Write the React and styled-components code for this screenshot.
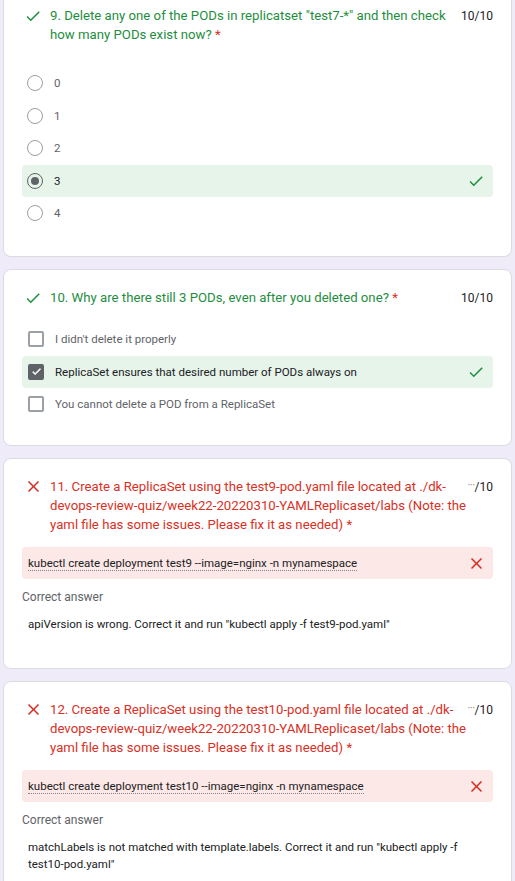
import React from "react";
import styled, { createGlobalStyle } from "styled-components";

const GREEN = "#1e8e3e";
const RED = "#d93025";

const GlobalStyle = createGlobalStyle`
    body {
        margin: 0;
        background: #f0ebf8;
        font-family: Roboto, "Liberation Sans", sans-serif;
    }
`;

const CheckIcon = ({ size = 18, color = GREEN }) => (
    <svg width={size} height={size} viewBox="0 0 24 24" fill={color}>
        <path d="M9 16.17L4.83 12l-1.42 1.41L9 19 21 7l-1.41-1.41z" />
    </svg>
);

const CrossIcon = ({ size = 19, color = RED }) => (
    <svg width={size} height={size} viewBox="0 0 24 24" fill={color}>
        <path d="M19 6.41L17.59 5 12 10.59 6.41 5 5 6.41 10.59 12 5 17.59 6.41 19 12 13.41 17.59 19 19 17.59 13.41 12z" />
    </svg>
);

const questions = [
    {
        id: 9,
        kind: "radio",
        correct: true,
        title: '9. Delete any one of the PODs in replicatset "test7-*" and then check how many PODs exist now?',
        options: ["0", "1", "2", "3", "4"],
        picked: [3],
    },
    {
        id: 10,
        kind: "checkbox",
        correct: true,
        title: "10. Why are there still 3 PODs, even after you deleted one?",
        options: [
            "I didn't delete it properly",
            "ReplicaSet ensures that desired number of PODs always on",
            "You cannot delete a POD from a ReplicaSet",
        ],
        picked: [1],
    },
    {
        id: 11,
        kind: "text",
        correct: false,
        title: "11. Create a ReplicaSet using the test9-pod.yaml file located at ./dk-devops-review-quiz/week22-20220310-YAMLReplicaset/labs (Note: the yaml file has some issues. Please fix it as needed)",
        response: "kubectl create deployment test9 --image=nginx -n mynamespace",
        answer: 'apiVersion is wrong. Correct it and run "kubectl apply -f test9-pod.yaml"',
    },
    {
        id: 12,
        kind: "text",
        correct: false,
        title: "12. Create a ReplicaSet using the test10-pod.yaml file located at ./dk-devops-review-quiz/week22-20220310-YAMLReplicaset/labs (Note: the yaml file has some issues. Please fix it as needed)",
        response: "kubectl create deployment test10 --image=nginx -n mynamespace",
        answer: 'matchLabels is not matched with template.labels. Correct it and run "kubectl apply -f test10-pod.yaml"',
    },
];

const App = () => (
    <>
        <GlobalStyle />
        <Page>
            {questions.map((q, index) => (
                <Card key={q.id} $continued={index === 0} $text={q.kind === "text"}>
                    <Header>
                        <StatusIcon>{q.correct ? <CheckIcon /> : <CrossIcon />}</StatusIcon>
                        <Title $correct={q.correct}>
                            {q.title}&nbsp;<Required>*</Required>
                        </Title>
                        <Score>
                            {q.correct ? "10/10" : <><Dots>···</Dots>/10</>}
                        </Score>
                    </Header>

                    {q.options && (
                        <Options $spaced={q.kind === "radio"}>
                            {q.options.map((opt, i) => {
                                const picked = q.picked.includes(i);
                                return (
                                    <Option key={opt} $picked={picked}>
                                        {q.kind === "radio" ? (
                                            <Radio $picked={picked} />
                                        ) : (
                                            <Box $picked={picked}>
                                                {picked && (
                                                    <svg width="11" height="11" viewBox="0 0 24 24" fill="#fff">
                                                        <path d="M9 16.17L4.83 12l-1.42 1.41L9 19 21 7l-1.41-1.41z" stroke="#fff" strokeWidth="1.5" />
                                                    </svg>
                                                )}
                                            </Box>
                                        )}
                                        <OptionLabel $picked={picked}>{opt}</OptionLabel>
                                        {picked && (
                                            <Mark>
                                                <CheckIcon size={18} />
                                            </Mark>
                                        )}
                                    </Option>
                                );
                            })}
                        </Options>
                    )}

                    {q.kind === "text" && (
                        <>
                            <Response>
                                <ResponseText>{q.response}</ResponseText>
                                <CrossIcon size={19} />
                            </Response>
                            <AnswerHeading>Correct answer</AnswerHeading>
                            <Answer>{q.answer}</Answer>
                        </>
                    )}
                </Card>
            ))}
        </Page>
    </>
);

const Page = styled.main`
    display: flex;
    flex-direction: column;
    gap: 12px;
    padding: 0 3px 20px;
`;

const Card = styled.section`
    background: #fff;
    border: 1px solid #dadce0;
    border-radius: ${p => (p.$continued ? "0 0 8px 8px" : "8px")};
    border-top: ${p => (p.$continued ? "none" : "1px solid #dadce0")};
    padding: 18px 18px 25px;
    padding-top: ${p => (p.$continued ? "6px" : "18px")};
    padding-bottom: ${p => (p.$continued ? "27px" : p.$text ? "35px" : "25px")};
`;

const Header = styled.div`
    display: grid;
    grid-template-columns: 28px 1fr 26px;
    align-items: start;
`;

const StatusIcon = styled.div`
    display: flex;
    align-items: center;
    height: 19px;
    padding-left: 2px;
`;

const Title = styled.div`
    font-size: 13.2px;
    line-height: 19px;
    color: ${p => (p.$correct ? GREEN : RED)};
`;

const Required = styled.span`
    color: ${RED};
`;

const Score = styled.div`
    display: flex;
    justify-content: flex-end;
    align-items: baseline;
    font-size: 12px;
    line-height: 19px;
    color: #202124;
    white-space: nowrap;
    padding-top: 1px;
`;

const Dots = styled.span`
    color: #80868b;
    font-size: 11px;
    letter-spacing: -0.5px;
    position: relative;
    top: -2px;
`;

const Options = styled.div`
    display: flex;
    flex-direction: column;
    margin-top: ${p => (p.$spaced ? "23px" : "15px")};
`;

const Option = styled.div`
    display: flex;
    align-items: center;
    height: 32px;
    padding: 0 8px 0 5px;
    border-radius: 4px;
    background: ${p => (p.$picked ? "#e6f4ea" : "transparent")};
    & + & {
        margin-top: 0.5px;
    }
`;

const Radio = styled.span`
    box-sizing: border-box;
    width: 16px;
    height: 16px;
    border-radius: 50%;
    border: 1.5px solid ${p => (p.$picked ? "#5f6368" : "#9aa0a6")};
    display: flex;
    align-items: center;
    justify-content: center;
    flex-shrink: 0;

    &::after {
        content: "";
        display: ${p => (p.$picked ? "block" : "none")};
        width: 8px;
        height: 8px;
        border-radius: 50%;
        background: #5f6368;
    }
`;

const Box = styled.span`
    box-sizing: border-box;
    width: 16px;
    height: 16px;
    border-radius: 2px;
    border: 2px solid ${p => (p.$picked ? "#5f6368" : "#9aa0a6")};
    background: ${p => (p.$picked ? "#5f6368" : "#fff")};
    display: flex;
    align-items: center;
    justify-content: center;
    flex-shrink: 0;
    margin-left: 1px;
`;

const OptionLabel = styled.span`
    font-size: 11.5px;
    color: ${p => (p.$picked ? "#202124" : "#5f6368")};
    margin-left: 11px;
    flex: 1;
`;

const Mark = styled.span`
    display: flex;
    align-items: center;
`;

const Response = styled.div`
    display: flex;
    align-items: center;
    justify-content: space-between;
    height: 32px;
    margin-top: 13px;
    padding: 0 7px 0 6px;
    border-radius: 4px;
    background: #fce8e6;
`;

const ResponseText = styled.span`
    font-size: 11.5px;
    color: #202124;
    border-bottom: 1px dotted #80868b;
    line-height: 14px;
`;

const AnswerHeading = styled.div`
    font-size: 12px;
    color: #5f6368;
    margin-top: 10px;
    line-height: 16px;
`;

const Answer = styled.div`
    font-size: 11.5px;
    line-height: 17px;
    color: #202124;
    padding: 11px 25px 0 6px;
`;

export default App;
